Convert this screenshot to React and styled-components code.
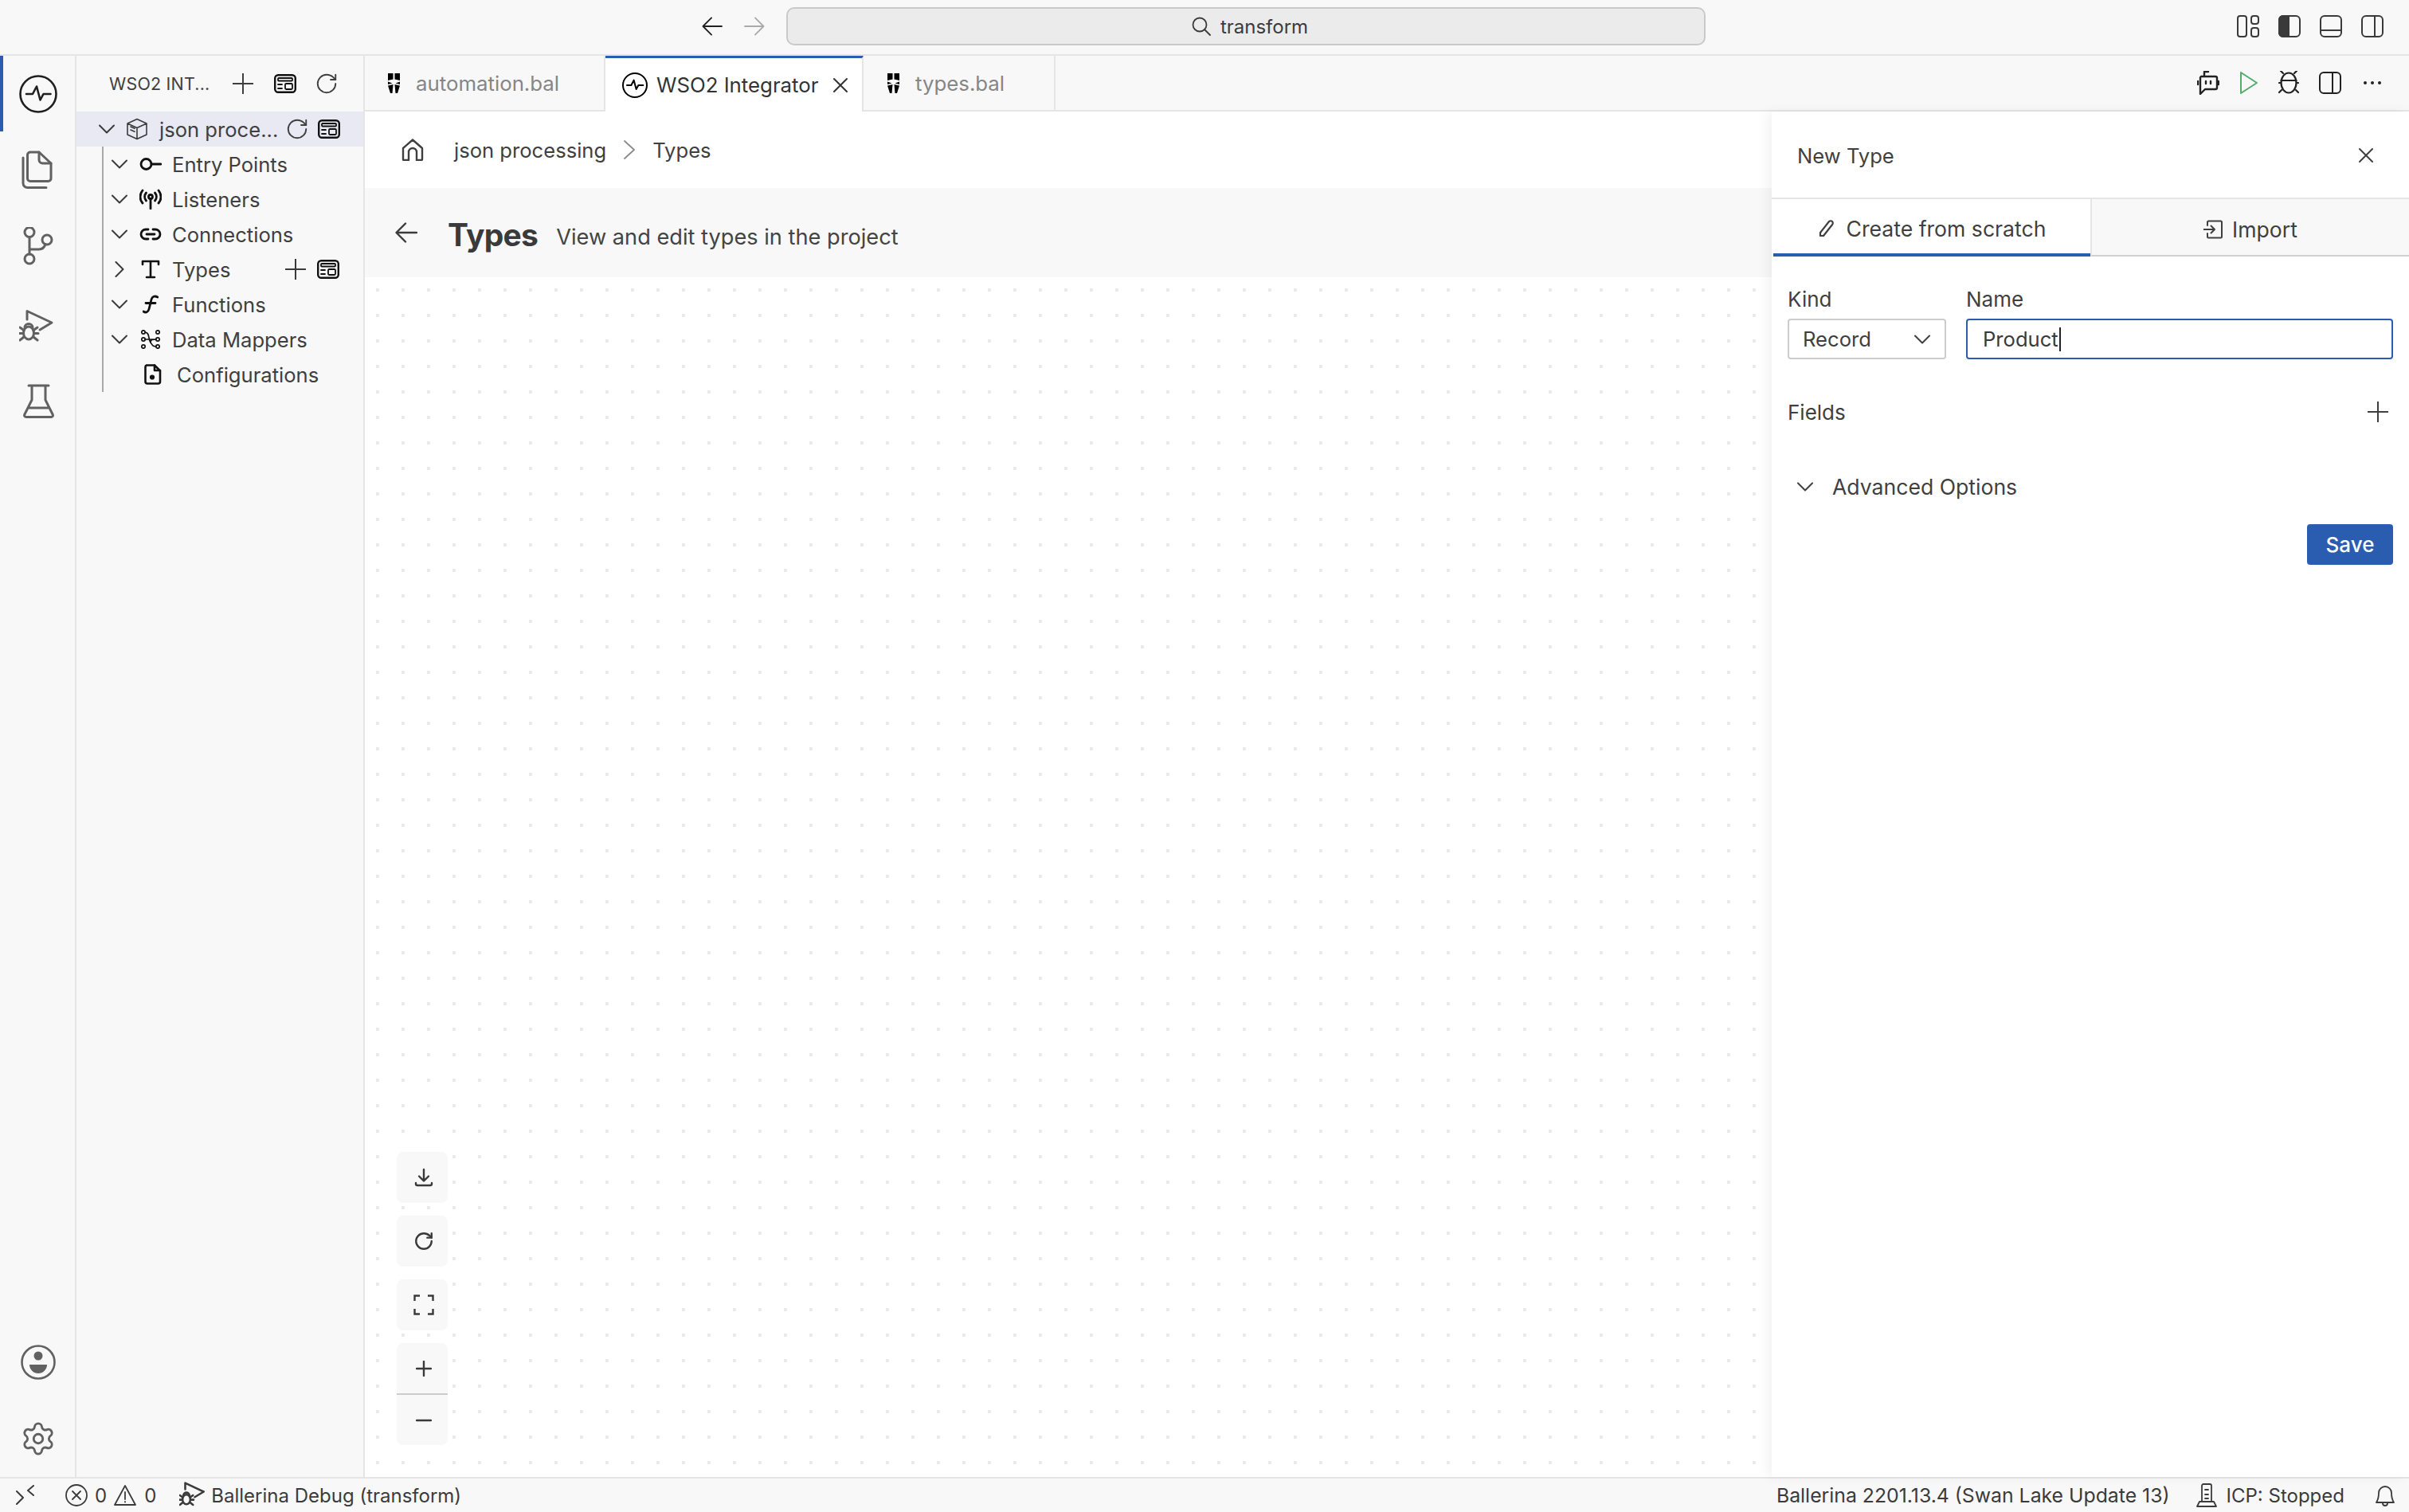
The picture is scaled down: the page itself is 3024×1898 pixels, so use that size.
import React from 'react';
import styled, { createGlobalStyle } from 'styled-components';
import { RotateCw, Settings } from 'lucide-react';

const Global = createGlobalStyle`
  html, body { margin: 0; padding: 0; background: #f8f8f8; }
  * { box-sizing: border-box; }
  body { font-family: Inter, "Liberation Sans", sans-serif; color: #3b3b3b; }
`;

const Page = styled.div`
  width: 3024px; height: 1898px; display: flex; flex-direction: column; overflow: hidden; background: #f8f8f8;
`;
const TitleBar = styled.header`
  height: 70px; flex: none; display: flex; align-items: center; border-bottom: 2px solid #e5e5e5;
  padding: 0 32px 2px 881px;
`;
const NavGroup = styled.div`display: flex; align-items: center; gap: 27px; margin-right: 27px;`;
const NavArrow = styled.span`display: flex; color: ${p => (p.$off ? '#aaa' : '#222')};`;
const SearchBox = styled.div`
  width: 1154px; height: 48px; border: 2px solid #c9c9c9; border-radius: 10px; background: #ebebeb;
  display: flex; align-items: center; justify-content: center; gap: 12px; font-size: 24px; color: #3b3b3b;
  padding-left: 10px;
`;
const LayoutGroup = styled.div`margin-left: auto; display: flex; align-items: center; gap: 24px; color: #3a3a3a;`;
const Body = styled.div`flex: 1; min-height: 0; display: flex;`;
const ActivityBar = styled.nav`
  width: 96px; flex: none; border-right: 2px solid #e5e5e5; display: flex; flex-direction: column; align-items: center;
  color: #616161;
`;
const ActivityItem = styled.div`
  width: 100%; height: ${p => p.$h}px; display: flex; align-items: center; justify-content: center; flex: none;
  border-left: 4px solid ${p => (p.$active ? '#2a5db0' : 'transparent')};
  padding-right: 2px;
  color: ${p => (p.$active ? '#1f1f1f' : '#616161')};
`;
const ActivitySpacer = styled.div`flex: 1;`;
const SideBar = styled.aside`
  width: 362px; flex: none; border-right: 2px solid #e5e5e5; display: flex; flex-direction: column;
`;
const SideHeader = styled.div`
  height: 70px; flex: none; display: flex; align-items: center; padding: 0 0 0 41px; font-size: 21.5px; color: #3f3f3f;
`;
const SideTitle = styled.span`width: 155px; letter-spacing: 0.2px; white-space: nowrap;`;
const SideActions = styled.div`display: flex; align-items: center; gap: 26px;`;
const RefreshSlot = styled.span`display: flex; margin-left: ${p => p.$ml || 0}px;`;
const ProjectRow = styled.div`
  height: 44px; flex: none; background: #e8e9f2; display: flex; align-items: center; padding-left: 28px; font-size: 25.6px;
`;
const ProjectName = styled.span`margin-left: 14px; width: 158px; color: #3f3f3f; white-space: nowrap;`;
const TreeWrap = styled.div`
  margin-left: 32px; border-left: 2px solid #a8a8a8; height: 308px; display: flex; flex-direction: column;
`;
const TreeRow = styled.div`
  height: 44px; flex: none; display: flex; align-items: center; font-size: 25.6px; color: #3f3f3f;
  padding-left: ${p => p.$indent || 10}px;
`;
const Twist = styled.span`width: 20px; margin-right: ${p => p.$mr ?? 15}px; display: flex; justify-content: center; color: #3a3a3a; flex: none;`;
const TreeIcon = styled.span`width: 28px; margin-right: ${p => p.$gap ?? 13}px; display: flex; justify-content: center; color: #111; flex: none;`;
const TreeLabel = styled.span`width: ${p => p.$w || 'auto'};`;
const RowActions = styled.div`display: flex; align-items: center; gap: ${p => p.$gap ?? 14}px; color: #3a3a3a;`;
const Editor = styled.main`flex: 1; min-width: 0; display: flex; flex-direction: column; background: #fff;`;
const TabBar = styled.div`
  height: 70px; flex: none; display: flex; background: #f8f8f8; border-bottom: 2px solid #e5e5e5;
`;
const Tab = styled.div`
  width: ${p => p.$w}px; flex: none; height: ${p => (p.$active ? 70 : 68)}px; display: flex; align-items: center;
  padding-left: ${p => p.$pad}px;
  border-right: 2px solid #e5e5e5; font-size: 25.8px;
  background: ${p => (p.$active ? '#fff' : '#f8f8f8')};
  border-top: ${p => (p.$active ? '3px solid #2a5db0' : '0')};
  color: ${p => (p.$active ? '#333' : '#868686')};
`;
const TabIcon = styled.span`display: flex; flex: none; margin-right: ${p => p.$gap}px; color: #000;`;
const TabClose = styled.span`display: flex; margin-left: 18px; color: #333;`;
const TabActions = styled.div`margin-left: auto; display: flex; align-items: center; gap: 25px; padding-right: 34px; color: #222;`;
const DotsSlot = styled.span`display: flex; margin-left: 2px;`;
const EditorBody = styled.div`flex: 1; min-height: 0; display: flex;`;
const Content = styled.section`flex: 1; min-width: 0; display: flex; flex-direction: column;`;
const Breadcrumb = styled.div`
  height: 96px; flex: none; display: flex; align-items: center; padding-left: 46px; font-size: 25.6px; color: #3f3f3f; background: #fff;
`;
const Crumb = styled.span`margin-left: ${p => p.$ml}px;`;
const CrumbSep = styled.span`display: flex; margin: 0 22px; color: #8a8a8a;`;
const PageHead = styled.div`
  height: 112px; flex: none; background: #f8f8f8; display: flex; align-items: center; padding-left: 38px; color: #3b3b3b;
`;
const PageTitle = styled.h1`margin: 6px 23px 0 38px; font-size: 39px; line-height: 48px; font-weight: 700; color: #3a3a3a; letter-spacing: -0.7px;`;
const PageSub = styled.span`font-size: 27.2px; padding-top: 10px; color: #444;`;
const Canvas = styled.div`
  flex: 1; position: relative;
  background-color: #fff;
  background-image: radial-gradient(circle, #e6e9f1 2px, transparent 2.4px);
  background-size: 32px 32px;
`;
const Controls = styled.div`
  position: absolute; left: 40px; bottom: 40px; display: flex; flex-direction: column; gap: 16px;
`;
const ControlBtn = styled.div`
  width: 64px; height: 64px; border-radius: 8px; background: #f8f8f8; display: flex; align-items: center; justify-content: center;
  color: #3a3a3a; padding-left: 4px;
`;
const ZoomGroup = styled.div`
  width: 64px; height: 128px; border-radius: 8px; background: #f8f8f8; display: flex; flex-direction: column; color: #3a3a3a;
`;
const ZoomBtn = styled.div`
  flex: 1; display: flex; align-items: center; justify-content: center; padding-left: 4px;
  border-top: ${p => (p.$split ? '2px solid #cccccc' : '0')};
`;
const Panel = styled.aside`
  width: 800px; flex: none; background: #fff; box-shadow: -6px 0 14px rgba(0,0,0,0.05); position: relative; display: flex; flex-direction: column;
`;
const PanelHead = styled.div`
  height: 110px; flex: none; border-bottom: 2px solid #e5e5e5; display: flex; align-items: center; justify-content: space-between;
  padding: 2px 44px 0 32px; font-size: 25.6px; color: #3f3f3f;
`;
const PanelTabs = styled.div`display: flex; height: 72px; flex: none; padding-left: 2px; background: #fff;`;
const PanelTab = styled.div`
  flex: 1; display: flex; align-items: center; justify-content: center; gap: ${p => p.$gap}px; font-size: 26.6px; color: #3f3f3f;
  background: ${p => (p.$active ? '#fff' : '#f8f8f8')};
  border-bottom: ${p => (p.$active ? '4px solid #2a5db0' : '2px solid #d0d0d0')};
  border-left: ${p => (p.$active ? '0' : '2px solid #e5e5e5')};
  padding-top: 6px;
`;
const Form = styled.div`padding: 0 20px 0 20px; display: flex; flex-direction: column;`;
const FormRow = styled.div`display: flex; gap: 25px; margin-top: 38px;`;
const Field = styled.div`display: flex; flex-direction: column; width: ${p => p.$w}px;`;
const Label = styled.label`font-size: 26px; line-height: 32px; margin-bottom: 8px; color: #3f3f3f;`;
const SelectBox = styled.div`
  height: 51px; border: 2px solid #cccccc; border-radius: 4px; display: flex; align-items: center; justify-content: space-between;
  padding: 0 18px 0 17px; font-size: 25.6px; color: #3f3f3f;
`;
const NameInput = styled.div`
  height: 51px; border: 2px solid #2a5db0; border-radius: 4px; display: flex; align-items: center; padding-left: 19px; font-size: 25.6px; color: #3a3a3a;
`;
const Caret = styled.span`width: 2px; height: 30px; background: #222; margin-left: 1px;`;
const FieldsRow = styled.div`
  display: flex; justify-content: space-between; align-items: center; margin-top: 48px; height: 36px; font-size: 26px; color: #3f3f3f; padding-right: 6px;
`;
const AdvancedRow = styled.div`
  display: flex; align-items: center; gap: 24px; margin-top: 60px; padding-left: 12px; height: 32px; font-size: 26.6px; color: #3f3f3f;
`;
const SaveRow = styled.div`display: flex; justify-content: flex-end; margin-top: 31px;`;
const SaveBtn = styled.button`
  width: 108px; height: 51px; border: 0; border-radius: 4px; background: #2a5db0; color: #fff; font: 500 26px Inter, sans-serif; padding: 0;
`;
const StatusBar = styled.footer`
  height: 44px; flex: none; border-top: 2px solid #e5e5e5; display: flex; align-items: center; font-size: 24px; color: #3b3b3b; padding: 0 16px 0 20px;
`;
const StatusLeft = styled.div`display: flex; align-items: center;`;
const StatusRight = styled.div`margin-left: auto; display: flex; align-items: center;`;
const StatusItem = styled.span`display: flex; align-items: center; margin-left: ${p => p.$ml || 0}px; gap: ${p => p.$gap || 0}px;`;
const VersionLabel = styled.span`font-size: 24.8px;`;

const Ico = ({ w = 28, h, vb, sw = 2, fill = 'none', children }) => (
  <svg width={w} height={h || w} viewBox={vb || `0 0 ${w} ${h || w}`} fill={fill} stroke="currentColor" strokeWidth={sw} strokeLinecap="round" strokeLinejoin="round">
    {children}
  </svg>
);

const Chev = ({ dir = 'down', w = 20 }) => (
  dir === 'down'
    ? <Ico w={w} h={12} vb="0 0 20 12" sw={2}><path d="M1 1.5l9 9 9-9" /></Ico>
    : <Ico w={12} h={20} vb="0 0 12 20" sw={2}><path d="M1.5 1l9 9-9 9" /></Ico>
);
const PlusIcon = ({ s = 26 }) => <Ico w={s} vb="0 0 26 26" sw={2}><path d="M13 0v26M0 13h26" /></Ico>;
const CloseIcon = ({ s = 20 }) => <Ico w={s} vb="0 0 20 20" sw={2}><path d="M2 2l16 16M18 2L2 18" /></Ico>;
const Refresh = ({ s = 30 }) => <RotateCw size={s} strokeWidth={1.5} color="#3f3f3f" />;
const DesignIcon = () => (
  <Ico w={28} h={24} vb="0 0 28 24" sw={2.4}>
    <rect x="1.2" y="1.2" width="25.6" height="21.6" rx="4" stroke="#111" />
    <rect x="5" y="5" width="18" height="3.5" rx="1" stroke="#111" strokeWidth="1.8" />
    <path d="M5 13h5M5 18h5" stroke="#111" strokeWidth="1.8" />
    <rect x="14" y="12" width="9" height="7" rx="1.2" stroke="#111" strokeWidth="1.8" />
  </Ico>
);
const PulseCircle = ({ s = 48, sw = 2.6 }) => (
  <Ico w={s} vb="0 0 48 48" sw={sw}>
    <circle cx="24" cy="24" r="22.5" />
    <path d="M9 24h8l5-9.5 4.5 17 4-7.5h9" />
  </Ico>
);
const FilesIcon = () => (
  <Ico w={48} sw={3}>
    <g transform="translate(2 0)">
      <path d="M12 2h11l15 14v19a3.5 3.5 0 0 1-3.5 3.5H12A3.5 3.5 0 0 1 8.500 35V5.500A3.500 3.500 0 0 1 12 2z" />
      <path d="M23 2v9.500a4.500 4.500 0 0 0 4.500 4.500H38" />
      <path d="M3 9v32a5.500 5.500 0 0 0 5.500 5.500H32" />
    </g>
  </Ico>
);
const GitIcon = () => (
  <Ico w={48} sw={3}>
    <circle cx="13" cy="6.500" r="6" /><circle cx="35" cy="16" r="6" /><circle cx="13" cy="40" r="6" />
    <path d="M13 12.500V34M13 28h12q6 0 8-6.500" />
  </Ico>
);
const DebugIcon = ({ s = 48, sw = 3 }) => (
  <Ico w={s} vb="0 0 48 48" sw={sw}>
    <path d="M10 14V3.500L41 18l-15 9" />
    <path d="M5.500 31a6.500 8 0 0 0 13 0 6.500 8 0 0 0-13 0z" />
    <path d="M7 24a5 4.500 0 0 1 10 0" />
    <path d="M1 24l5 3.500M23 24l-5 3.500M0 31.500h5M24 31.500h-5M1 40l5-4M23 40l-5-4" />
  </Ico>
);
const FlaskIcon = () => (
  <Ico w={48} sw={3}>
    <path d="M12 4h25M16 4v18L7 40c-1 2 0 3.500 2 3.500h31c2 0 3-1.500 2-3.500L33 22V4M11.500 32h26" />
  </Ico>
);
const AccountIcon = () => (
  <Ico w={44} vb="0 0 44 44" sw={2.6}>
    <circle cx="22" cy="22" r="20.500" />
    <circle cx="22" cy="14" r="5.500" fill="currentColor" stroke="none" />
    <path d="M11 25h22a11 11 0 0 1-22 0z" fill="currentColor" stroke="none" />
  </Ico>
);
const EntryIcon = () => <Ico w={28} h={20} vb="0 0 28 20" sw={2.8}><circle cx="8.500" cy="10" r="6.500" /><path d="M15 10h12" /></Ico>;
const ListenIcon = () => (
  <Ico w={28} h={26} vb="0 0 28 26" sw={2.8}>
    <circle cx="14" cy="10" r="2.500" /><path d="M14 13v12" />
    <path d="M8.500 5c-2.500 3-2.500 7 0 10M19.500 5c2.500 3 2.500 7 0 10M4 2c-4 5-4 11.500 0 16M24 2c4 5 4 11.500 0 16" />
  </Ico>
);
const LinkIcon = () => (
  <Ico w={28} h={16} vb="0 0 28 16" sw={2.8}>
    <path d="M11 2H8a6 6 0 0 0 0 12h3M17 2h3a6 6 0 0 1 0 12h-3M9 8h10" />
  </Ico>
);
const TypeIcon = () => <Ico w={24} vb="0 0 24 24" sw={2.6}><path d="M2 6V2h20v4M12 2v20M7 22h10" /></Ico>;
const FuncIcon = () => <Ico w={20} h={24} vb="0 0 20 24" sw={2.8}><path d="M19 3c-4-2-7-1-8 3L8 18c-1 4-4 5-7 3M4 10.500h12" /></Ico>;
const MapperIcon = () => (
  <Ico w={24} vb="0 0 24 24" sw={1.7}>
    <circle cx="3" cy="3" r="2.200" /><circle cx="21" cy="3" r="2.200" /><circle cx="3" cy="12" r="2.200" /><circle cx="21" cy="12" r="2.200" /><circle cx="3" cy="21" r="2.200" /><circle cx="21" cy="21" r="2.200" />
    <path d="M5 3c6 0 4 9 7 13s3 5 7 5M5 12h14M12 16c0-4 2-4 7-4" />
  </Ico>
);
const ConfigIcon = () => (
  <Ico w={22} h={26} vb="0 0 22 26" sw={2.6}>
    <path d="M3 1.500h10l7 7V22a2.500 2.500 0 0 1-2.500 2.500h-14A2.500 2.500 0 0 1 1.500 22V4A2.500 2.500 0 0 1 3 1.500z" />
    <path d="M13 1.500V8h7" />
    <circle cx="10" cy="16.500" r="2.500" fill="currentColor" strokeWidth="1.200" />
  </Ico>
);
const BalIcon = () => (
  <svg width="15" height="25" viewBox="0 0 15 25" fill="#000">
    <path d="M0 0h6.500v7.500L0 9zM15 0H8.500v7.500L15 9zM0 10.500l5.500 2L0 14zM15 10.500l-5.500 2L15 14zM0 15.500l6.500-1.500-1 11H3zM15 15.500L8.500 14l1 11H12z" />
  </svg>
);
const BackArrow = ({ w = 28, h = 26, sw = 2.4 }) => <Ico w={w} h={h} vb="0 0 28 26" sw={sw}><path d="M27 13H2M13 1.500L1.500 13 13 24.500" /></Ico>;
const HomeIcon = () => (
  <Ico w={28} h={28} vb="0 0 28 28" sw={2.4}>
    <path d="M2 12L14 1.500 26 12v14a1 1 0 0 1-1 1h-6V17a5 5 0 0 0-10 0v10H3a1 1 0 0 1-1-1z" />
  </Ico>
);
const SearchIcon = () => <Ico w={24} vb="0 0 24 24" sw={1.8}><circle cx="10" cy="10" r="8.500" /><path d="M16 16l7 7" /></Ico>;
const PanelLayoutIcon = ({ kind }) => (
  <Ico w={28} h={28} vb="0 0 28 28" sw={2}>
    <rect x="1" y="1" width="26" height="26" rx="5" />
    {kind === 'left' && <path d="M6 1h7v26H6a5 5 0 0 1-5-5V6a5 5 0 0 1 5-5z" fill="currentColor" />}
    {kind === 'bottom' && <path d="M1 19h26" />}
    {kind === 'right' && <path d="M17 1v26" />}
  </Ico>
);
const CustomLayoutIcon = () => (
  <Ico w={28} h={28} vb="0 0 28 28" sw={2}>
    <rect x="1" y="1" width="11" height="26" rx="3" />
    <rect x="18" y="1" width="9" height="10" rx="3" />
    <rect x="18" y="16" width="9" height="11" rx="3" />
  </Ico>
);
const RobotIcon = () => (
  <Ico w={28} h={30} vb="0 0 28 30" sw={2.400}>
    <path d="M14 1H9v6M5 7h18a2 2 0 0 1 2 2v12a2 2 0 0 1-2 2H10l-6 6V9a2 2 0 0 1 1-2zM1 13v4M27 13v4M11 13v3M17 13v3" />
  </Ico>
);
const PlayIcon = () => <svg width="24" height="30" viewBox="0 0 24 30" fill="none" stroke="#4fae6c" strokeWidth="2" strokeLinejoin="round"><path d="M2 2l20 13L2 28z" /></svg>;
const BugIcon = () => (
  <Ico w={26} h={30} vb="0 0 26 30" sw={2.200}>
    <ellipse cx="13" cy="15" rx="9.500" ry="12.500" /><path d="M3.500 12h19M6 3L3 0M20 3l3-3M1 15h2M23 15h2M4 24l-3 3M22 24l3 3" />
  </Ico>
);
const DotsIcon = () => <svg width="24" height="6" viewBox="0 0 24 6" fill="currentColor"><circle cx="3" cy="3" r="2" /><circle cx="12" cy="3" r="2" /><circle cx="21" cy="3" r="2" /></svg>;
const PencilIcon = () => <Ico w={20} h={22} vb="0 0 20 22" sw={2.200}><path d="M3 16L14 2c1-1 3-1 4 0s1 3 0 4L7 20H3z" /></Ico>;
const ImportIcon = () => <Ico w={24} h={24} vb="0 0 24 24" sw={2}><path d="M5 7V3a1.500 1.500 0 0 1 1.500-1.500h15A1.500 1.500 0 0 1 23 3v18a1.500 1.500 0 0 1-1.500 1.500h-15A1.500 1.500 0 0 1 5 21v-4M0 12h14M9.500 7.500L14 12l-4.500 4.500" /></Ico>;
const DownloadIcon = () => <Ico w={24} h={24} vb="0 0 24 24" sw={2.400}><path d="M12 2v14M6 10.500l6 6 6-6M2 19v1a2 2 0 0 0 2 2h16a2 2 0 0 0 2-2v-1" /></Ico>;
const FitIcon = () => <Ico w={26} h={26} vb="0 0 26 26" sw={2.400}><path d="M1.500 8V1.500H8M18 1.500h6.500V8M24.500 18v6.500H18M8 24.500H1.500V18" strokeLinecap="butt" strokeLinejoin="miter" /></Ico>;
const RemoteIcon = () => <Ico w={24} h={26} vb="0 0 24 26" sw={2}><path d="M1 8l8 8-8 8M22 1l-7 6 7 6" /></Ico>;
const ErrorIcon = () => <Ico w={28} vb="0 0 28 28" sw={1.800}><circle cx="14" cy="14" r="13" /><path d="M9 9l10 10M19 9L9 19" /></Ico>;
const WarnIcon = () => <Ico w={28} vb="0 0 28 28" sw={1.800}><path d="M14 2l13 24H1zM14 10v9M14 22v.5" /></Ico>;
const IcpIcon = () => <Ico w={26} h={30} vb="0 0 26 30" sw={1.800}><path d="M7 23V3a2 2 0 0 1 2-2h8a2 2 0 0 1 2 2v20M11 8h4M11 14h4M11 19h4M1 29l3-6h18l3 6z" /></Ico>;
const BellIcon = () => <Ico w={28} h={30} vb="0 0 28 30" sw={1.800}><path d="M3 24c2-3 3-6 3-12a8 8 0 0 1 16 0c0 6 1 9 3 12zM11 25a3 3 0 0 0 6 0" /></Ico>;
const CubeIcon = () => (
  <Ico w={28} vb="0 0 28 28" sw={1.600}>
    <path d="M14 1.500l12 5.500v14l-12 5.500L2 21V7zM2 7l12 5.500L26 7M14 12.500v14M6 11l5 2.300M6 15l5 2.300" />
  </Ico>
);

export default function App() {
  const rows = [
    { label: 'Entry Points', icon: <EntryIcon /> },
    { label: 'Listeners', icon: <ListenIcon /> },
    { label: 'Connections', icon: <LinkIcon /> },
  ];
  return (
    <Page>
      <Global />
      <TitleBar>
        <NavGroup>
          <NavArrow><BackArrow w={26} h={24} sw={2} /></NavArrow>
          <NavArrow $off><Ico w={26} h={24} vb="0 0 28 26" sw={2}><path d="M1 13h25M15 1.500L26.500 13 15 24.500" /></Ico></NavArrow>
        </NavGroup>
        <SearchBox><SearchIcon />transform</SearchBox>
        <LayoutGroup>
          <CustomLayoutIcon />
          <PanelLayoutIcon kind="left" />
          <PanelLayoutIcon kind="bottom" />
          <PanelLayoutIcon kind="right" />
        </LayoutGroup>
      </TitleBar>
      <Body>
        <ActivityBar>
          <ActivityItem $h={95} $active><PulseCircle /></ActivityItem>
          <ActivityItem $h={96}><FilesIcon /></ActivityItem>
          <ActivityItem $h={96}><GitIcon /></ActivityItem>
          <ActivityItem $h={108}><DebugIcon /></ActivityItem>
          <ActivityItem $h={78}><FlaskIcon /></ActivityItem>
          <ActivitySpacer />
          <ActivityItem $h={96}><AccountIcon /></ActivityItem>
          <ActivityItem $h={96}><Settings size={46} strokeWidth={1.5} /></ActivityItem>
        </ActivityBar>
        <SideBar>
          <SideHeader>
            <SideTitle>WSO2 INT...</SideTitle>
            <SideActions><PlusIcon /><DesignIcon /><RefreshSlot $ml={-3}><Refresh /></RefreshSlot></SideActions>
          </SideHeader>
          <ProjectRow>
            <Twist $mr={14}><Chev /></Twist>
            <CubeIcon />
            <ProjectName>json proce...</ProjectName>
            <RowActions $gap={11}><Refresh /><DesignIcon /></RowActions>
          </ProjectRow>
          <TreeWrap>
            {rows.map(r => (
              <TreeRow key={r.label}>
                <Twist><Chev /></Twist>
                <TreeIcon>{r.icon}</TreeIcon>
                <TreeLabel>{r.label}</TreeLabel>
              </TreeRow>
            ))}
            <TreeRow>
              <Twist><Chev dir="right" /></Twist>
              <TreeIcon><TypeIcon /></TreeIcon>
              <TreeLabel $w="142px">Types</TreeLabel>
              <RowActions><PlusIcon /><DesignIcon /></RowActions>
            </TreeRow>
            <TreeRow>
              <Twist><Chev /></Twist>
              <TreeIcon><FuncIcon /></TreeIcon>
              <TreeLabel>Functions</TreeLabel>
            </TreeRow>
            <TreeRow>
              <Twist><Chev /></Twist>
              <TreeIcon><MapperIcon /></TreeIcon>
              <TreeLabel>Data Mappers</TreeLabel>
            </TreeRow>
            <TreeRow $indent={48}>
              <TreeIcon $gap={16}><ConfigIcon /></TreeIcon>
              <TreeLabel>Configurations</TreeLabel>
            </TreeRow>
          </TreeWrap>
        </SideBar>
        <Editor>
          <TabBar>
            <Tab $w={302} $pad={29}><TabIcon $gap={20}><BalIcon /></TabIcon>automation.bal</Tab>
            <Tab $w={324} $pad={21} $active><TabIcon $gap={11}><PulseCircle s={32} sw={3} /></TabIcon>WSO2 Integrator<TabClose><CloseIcon /></TabClose></Tab>
            <Tab $w={241} $pad={30}><TabIcon $gap={20}><BalIcon /></TabIcon>types.bal</Tab>
            <TabActions>
              <RobotIcon /><PlayIcon /><BugIcon /><PanelLayoutIcon kind="right" /><DotsSlot><DotsIcon /></DotsSlot>
            </TabActions>
          </TabBar>
          <EditorBody>
            <Content>
              <Breadcrumb>
                <HomeIcon />
                <Crumb $ml={38}>json processing</Crumb>
                <CrumbSep><Ico w={14} h={24} vb="0 0 14 24" sw={1.800}><path d="M1 1l12 11L1 23" /></Ico></CrumbSep>
                <Crumb $ml={0}>Types</Crumb>
              </Breadcrumb>
              <PageHead>
                <BackArrow />
                <PageTitle>Types</PageTitle>
                <PageSub>View and edit types in the project</PageSub>
              </PageHead>
              <Canvas>
                <Controls>
                  <ControlBtn><DownloadIcon /></ControlBtn>
                  <ControlBtn><RotateCw size={26} strokeWidth={2.2} /></ControlBtn>
                  <ControlBtn><FitIcon /></ControlBtn>
                  <ZoomGroup>
                    <ZoomBtn><Ico w={20} vb="0 0 20 20" sw={2.400}><path d="M10 1v18M1 10h18" /></Ico></ZoomBtn>
                    <ZoomBtn $split><Ico w={20} h={4} vb="0 0 20 4" sw={2.400}><path d="M1 2h18" /></Ico></ZoomBtn>
                  </ZoomGroup>
                </Controls>
              </Canvas>
            </Content>
            <Panel>
              <PanelHead>New Type<CloseIcon /></PanelHead>
              <PanelTabs>
                <PanelTab $active $gap={16}><PencilIcon />Create from scratch</PanelTab>
                <PanelTab $gap={12}><ImportIcon />Import</PanelTab>
              </PanelTabs>
              <Form>
                <FormRow>
                  <Field $w={199}>
                    <Label>Kind</Label>
                    <SelectBox>Record<Chev /></SelectBox>
                  </Field>
                  <Field $w={536}>
                    <Label>Name</Label>
                    <NameInput>Product<Caret /></NameInput>
                  </Field>
                </FormRow>
                <FieldsRow>Fields<PlusIcon /></FieldsRow>
                <AdvancedRow><Chev />Advanced Options</AdvancedRow>
                <SaveRow><SaveBtn>Save</SaveBtn></SaveRow>
              </Form>
            </Panel>
          </EditorBody>
        </Editor>
      </Body>
      <StatusBar>
        <StatusLeft>
          <RemoteIcon />
          <StatusItem $ml={38} $gap={9}><ErrorIcon />0</StatusItem>
          <StatusItem $ml={9} $gap={10}><WarnIcon />0</StatusItem>
          <StatusItem $ml={29} $gap={4}><DebugIcon s={36} sw={3.4} />Ballerina Debug (transform)</StatusItem>
        </StatusLeft>
        <StatusRight>
          <VersionLabel>Ballerina 2201.13.4 (Swan Lake Update 13)</VersionLabel>
          <StatusItem $ml={33} $gap={12}><IcpIcon />ICP: Stopped</StatusItem>
          <StatusItem $ml={37}><BellIcon /></StatusItem>
        </StatusRight>
      </StatusBar>
    </Page>
  );
}
